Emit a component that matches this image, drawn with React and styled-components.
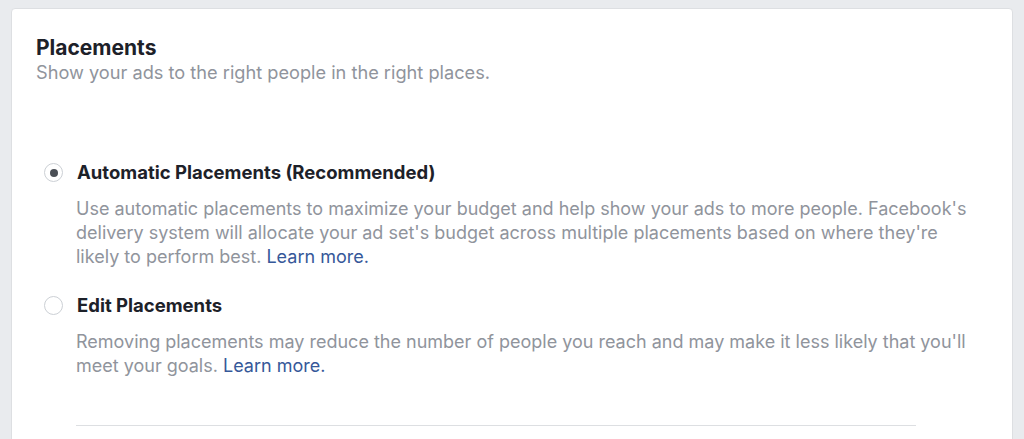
import { createGlobalStyle, styled } from 'styled-components';

const GlobalStyle = createGlobalStyle`
  body {
    margin: 0;
    background: #e9ebee;
    font-family: Inter, 'Liberation Sans', Arial, sans-serif;
  }
`;

const options = [
  {
    id: 'auto',
    label: 'Automatic Placements (Recommended)',
    text: "Use automatic placements to maximize your budget and help show your ads to more people. Facebook's delivery system will allocate your ad set's budget across multiple placements based on where they're likely to perform best.",
    checked: true,
  },
  {
    id: 'edit',
    label: 'Edit Placements',
    text: "Removing placements may reduce the number of people you reach and may make it less likely that you'll meet your goals.",
    checked: false,
  },
];

const App = () => {
  return (
    <Page>
      <GlobalStyle />
      <Card>
        <Title>Placements</Title>
        <Subtitle>Show your ads to the right people in the right places.</Subtitle>
        <OptionList>
          {options.map(option => (
            <Option key={option.id}>
              <OptionRow>
                <Radio checked={option.checked} />
                <OptionLabel>{option.label}</OptionLabel>
              </OptionRow>
              <OptionText>
                {option.text} <Link href="#">Learn more.</Link>
              </OptionText>
            </Option>
          ))}
        </OptionList>
        <Divider />
      </Card>
    </Page>
  );
};

export default App;

const Page = styled.div`
  padding: 8px 11px 0 11px;
  height: 439px;
  box-sizing: border-box;
  overflow: hidden;
`;

const Card = styled.div`
  background: #fff;
  border: 1px solid #dddfe2;
  border-radius: 4px;
  padding: 27px 24px 0 24px;
  height: 480px;
  box-sizing: border-box;
`;

const Title = styled.h2`
  margin: 0;
  font-size: 21px;
  line-height: 24px;
  font-weight: 700;
  color: #1d2129;
`;

const Subtitle = styled.p`
  margin: 0;
  font-size: 18.2px;
  line-height: 25px;
  color: #90949c;
`;

const OptionList = styled.div`
  display: flex;
  flex-direction: column;
  gap: 25px;
  margin-top: 76px;
`;

const Option = styled.div`
  display: flex;
  flex-direction: column;
  gap: 13px;
`;

const OptionRow = styled.div`
  display: flex;
  align-items: center;
  gap: 14px;
  margin-left: 8px;
`;

const Radio = styled.span`
  width: 19px;
  height: 19px;
  border-radius: 50%;
  border: 1px solid #ccd0d5;
  box-sizing: border-box;
  display: flex;
  align-items: center;
  justify-content: center;
  flex-shrink: 0;

  &::after {
    content: '';
    width: 8px;
    height: 8px;
    border-radius: 50%;
    background: #4b4f56;
    display: ${({ checked }) => (checked ? 'block' : 'none')};
  }
`;

const OptionLabel = styled.span`
  font-size: 18.5px;
  line-height: 23px;
  font-weight: 700;
  color: #1d2129;
`;

const OptionText = styled.p`
  margin: 0 0 0 40px;
  max-width: 900px;
  font-size: 18px;
  line-height: 24px;
  color: #90949c;
`;

const Link = styled.a`
  color: #365899;
  text-decoration: none;
`;

const Divider = styled.hr`
  margin: 47px 0 0 40px;
  width: 840px;
  border: 0;
  border-top: 1px solid #dddfe2;
`;
